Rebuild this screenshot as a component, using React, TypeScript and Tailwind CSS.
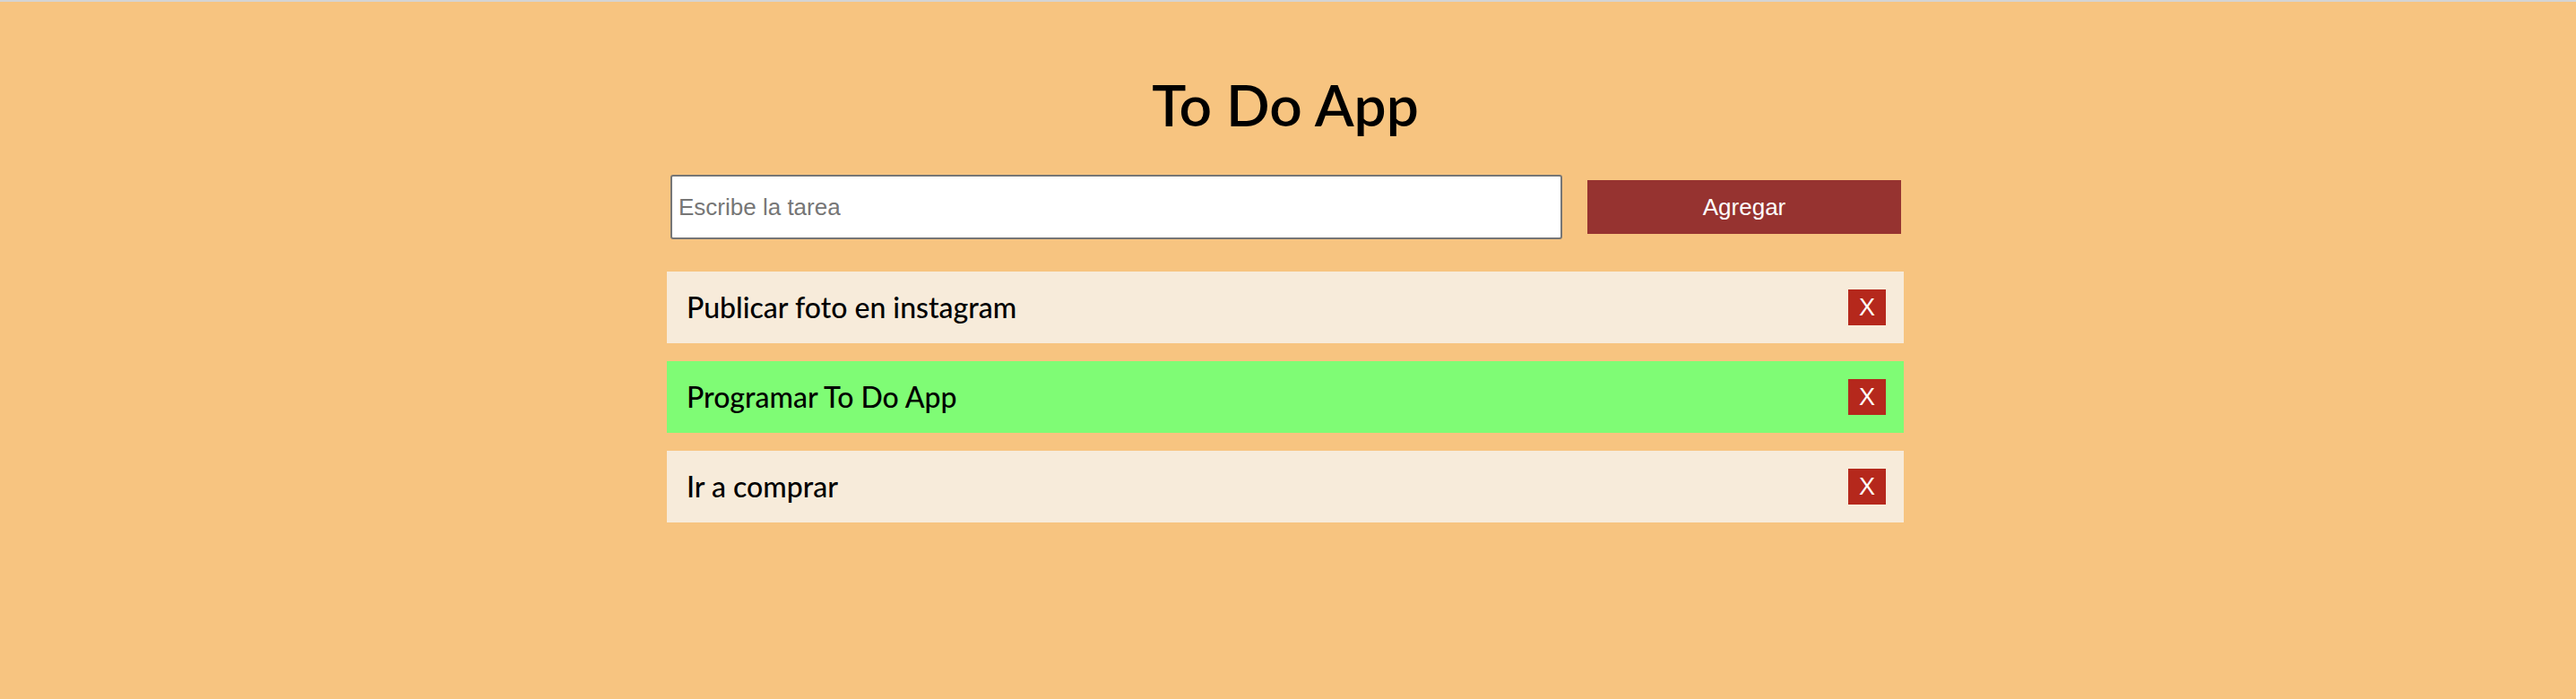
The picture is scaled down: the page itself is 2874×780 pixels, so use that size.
import React from "react";

const tasks = [
  { text: "Publicar foto en instagram", done: false },
  { text: "Programar To Do App", done: true },
  { text: "Ir a comprar", done: false },
];

export default function App() {
  return (
    <div className="min-h-[780px] bg-[#f7c480] border-t-2 border-[#d4d4d4] pr-[6px]">
      <div className="w-[1380px] mx-auto pt-[75px] flex flex-col">
        <h1
          className="text-center text-[64px] leading-[80px] font-semibold text-black"
          style={{ fontFamily: "Lato, 'Noto Sans', sans-serif" }}
        >
          To Do App
        </h1>
        <div className="mt-[38px] flex items-center gap-[28px] pl-[4px] pr-[3px]">
          <input
            type="text"
            placeholder="Escribe la tarea"
            className="flex-1 h-[72px] bg-white border-2 border-[#767676] rounded-[3px] pl-[7px] text-[26px] placeholder:text-[#767676] outline-none"
            style={{ fontFamily: "'Liberation Sans', Arial, sans-serif" }}
          />
          <button
            className="w-[350px] h-[60px] bg-[#963330] text-white text-[26px]"
            style={{ fontFamily: "'Liberation Sans', Arial, sans-serif" }}
          >
            Agregar
          </button>
        </div>
        <div className="mt-[36px] flex flex-col gap-[20px]">
          {tasks.map((t) => (
            <div
              key={t.text}
              className={`h-[80px] flex items-center justify-between pl-[22px] pr-[20px] ${
                t.done ? "bg-[#7ffc75]" : "bg-[#f7ebda]"
              }`}
            >
              <span
                className="text-[32px] font-medium text-black"
                style={{ fontFamily: "Lato, 'Noto Sans', sans-serif" }}
              >
                {t.text}
              </span>
              <button
                className="w-[42px] h-[40px] bg-[#b5281c] text-white text-[27px] leading-none flex items-center justify-center"
                style={{ fontFamily: "'Liberation Sans', Arial, sans-serif" }}
              >
                X
              </button>
            </div>
          ))}
        </div>
      </div>
    </div>
  );
}
